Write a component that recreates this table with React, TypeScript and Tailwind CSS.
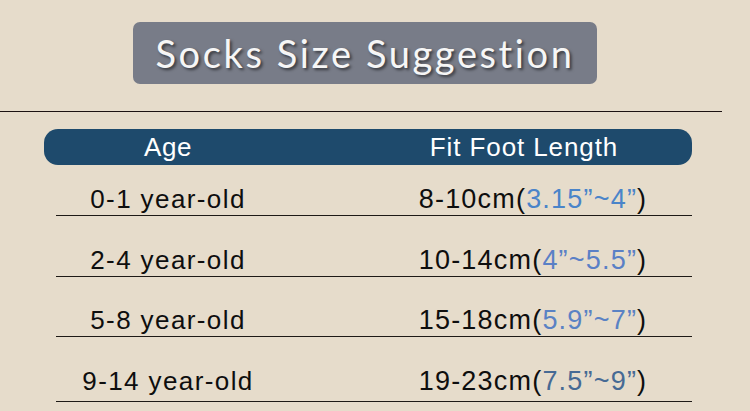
const rows = [
  { age: '0-1 year-old', cm: '8-10cm', inch: '3.15”~4”', blue: 'text-[#4a84c9]', h: 'h-[51px]', pb: 'pb-[3px]' },
  { age: '2-4 year-old', cm: '10-14cm', inch: '4”~5.5”', blue: 'text-[#5a80c6]', h: 'h-[61px]', pb: 'pb-[3px]' },
  { age: '5-8 year-old', cm: '15-18cm', inch: '5.9”~7”', blue: 'text-[#5a82c4]', h: 'h-[60px]', pb: 'pb-[3px]' },
  { age: '9-14 year-old', cm: '19-23cm', inch: '7.5”~9”', blue: 'text-[#466a94]', h: 'h-[65px]', pb: 'pb-[7px]' },
]

export default function App() {
  return (
    <main className="w-[750px] h-[411px] bg-[#e6dccb] overflow-hidden font-['Liberation_Sans',Arial,sans-serif]">
      {/* title */}
      <div className="pt-[22px] pl-[133px]">
        <div className="w-[464px] h-[62px] rounded-[7px] bg-[#787c88] flex items-center justify-center">
          <h1 className="font-['Lato',sans-serif] text-[38px] leading-none text-[#f6f6f6] tracking-[2.6px] [text-shadow:2px_2px_3px_rgba(0,0,0,0.55)]">
            Socks Size Suggestion
          </h1>
        </div>
      </div>

      <div className="mt-[27px] w-[722px] h-px bg-[#1c1212]" />

      {/* header */}
      <div className="mt-[17px] ml-[44px] w-[648px] h-[36px] rounded-[14px] bg-[#1e4a6c] flex items-center text-white text-[26px] leading-none">
        <div className="w-[248px] text-center tracking-[0.5px]">Age</div>
        <div className="ml-[82px] w-[300px] text-center tracking-[0.9px]">
          Fit Foot Length
        </div>
      </div>

      {/* rows */}
      {rows.map((r) => (
        <div
          key={r.age}
          className={`ml-[56px] w-[636px] border-b border-[#1e1a16] flex items-end leading-[26px] text-[#0e0e0e] ${r.h} ${r.pb}`}
        >
          <div className="w-[224px] text-center text-[26px] tracking-[1.4px]">{r.age}</div>
          <div className="ml-[103px] w-[300px] text-center text-[27px] tracking-[1.2px]">
            {r.cm}(<span className={r.blue}>{r.inch}</span>)
          </div>
        </div>
      ))}
    </main>
  )
}
